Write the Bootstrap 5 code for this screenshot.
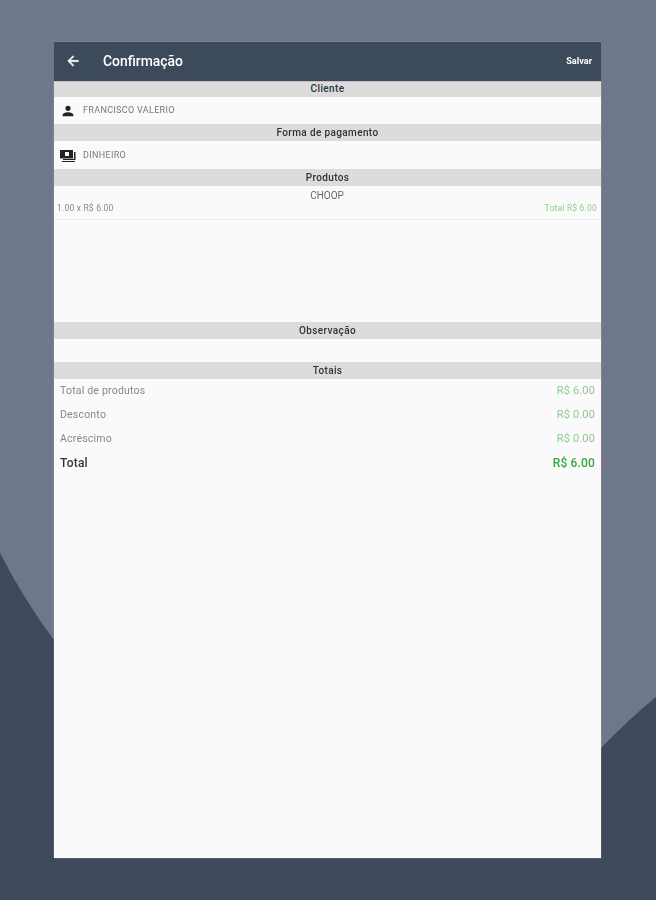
<!DOCTYPE html>
<html lang="pt">
<head>
<meta charset="utf-8">
<title>Confirmação</title>
<link href="https://cdn.jsdelivr.net/npm/bootstrap@5.3.0/dist/css/bootstrap.min.css" rel="stylesheet">
<style>
html,body{height:100%;}
body{background:#6f788a;font-family:Roboto,"Liberation Sans",sans-serif;color:#444;overflow:hidden;}
.stage{position:relative;height:900px;padding:42px 55px 42px 54px;}
.backdrop{position:absolute;inset:0;width:656px;height:900px;}
.panel{position:relative;height:816px;background:#fafafa;box-shadow:0 0 1px rgba(255,255,255,.5);filter:blur(.35px);}
.topbar{height:38px;background:#3d4a5c;color:#fff;padding:0 9px 0 11px;box-shadow:0 1px 1px rgba(25,32,50,.8);position:relative;}
.topbar svg{display:block;}
.page-title{font-size:13.9px;font-weight:500;margin-left:22px;}
.save{font-size:9.2px;font-weight:700;}
.sec-head{height:17px;line-height:17px;background:#dcdcdc;text-align:center;font-size:10px;font-weight:500;letter-spacing:.37px;color:#333;}
.info-row{height:27px;padding-left:6px;padding-top:1px;font-size:9px;color:#777;letter-spacing:.33px;}
.info-row.tall{height:28px;}
.info-row svg{flex:none;margin-right:7px;}
.prod{height:136px;}
.prod-inner{height:34px;padding:4px 4px 0 3px;border-bottom:1px solid #eee;font-size:8.5px;color:#888;letter-spacing:.2px;}
.prod-name{text-align:center;font-size:10px;line-height:12px;color:#666;letter-spacing:0;}
.prod-line{line-height:12px;}
.green-soft{color:#93c997;}
.obs{height:23px;}
.tot-list{padding:0 6px;}
.tot-row{height:24px;font-size:10.5px;color:#888;letter-spacing:.2px;}
.tot-row .val{font-size:11px;color:#8fc993;letter-spacing:.15px;}
.tot-row.grand{font-size:12px;font-weight:500;color:#333;}
.tot-row.grand .val{font-size:12px;font-weight:500;color:#3aa346;}
</style>
</head>
<body>
<div class="stage">
  <svg class="backdrop" viewBox="0 0 656 900" aria-hidden="true"><path fill="#3e4a5c" d="M0 553Q24 600 54 640L601 748Q628 720 656 697V900H0Z"/></svg>
  <main class="panel d-flex flex-column">
    <header class="topbar d-flex align-items-center">
      <svg width="16" height="16" viewBox="0 0 24 24" fill="#fff" stroke="#fff" stroke-width=".8"><path d="M20 11H7.83l5.59-5.59L12 4l-8 8 8 8 1.41-1.41L7.83 13H20z"/></svg>
      <span class="page-title">Confirmação</span>
      <span class="save ms-auto">Salvar</span>
    </header>
    <div class="sec-head">Cliente</div>
    <div class="info-row d-flex align-items-center">
      <svg width="16" height="16" viewBox="0 0 24 24" fill="#222"><path d="M12 12c2.2 0 4-1.800 4-4s-1.800-4-4-4-4 1.800-4 4 1.800 4 4 4zm0 2c-2.700 0-8 1.300-8 4v2h16v-2c0-2.700-5.300-4-8-4z"/></svg>
      <span>FRANCISCO VALERIO</span>
    </div>
    <div class="sec-head">Forma de pagamento</div>
    <div class="info-row tall d-flex align-items-center">
      <svg width="16" height="14" viewBox="0 0 16 14" fill="#222"><path d="M0 1h13v8.500H0zM5 3v4h4V3z" fill-rule="evenodd"/><path d="M14 3h1.500v8H3V10h11zM2 12h13v1H2z"/></svg>
      <span>DINHEIRO</span>
    </div>
    <div class="sec-head">Produtos</div>
    <div class="prod">
      <div class="prod-inner">
        <div class="prod-name">CHOOP</div>
        <div class="prod-line d-flex justify-content-between"><span>1.00 x R$ 6.00</span><span class="green-soft">Total R$ 6.00</span></div>
      </div>
    </div>
    <div class="sec-head">Observação</div>
    <div class="obs"></div>
    <div class="sec-head">Totais</div>
    <div class="tot-list">
      <div class="tot-row d-flex justify-content-between align-items-center"><span>Total de produtos</span><span class="val">R$ 6.00</span></div>
      <div class="tot-row d-flex justify-content-between align-items-center"><span>Desconto</span><span class="val">R$ 0.00</span></div>
      <div class="tot-row d-flex justify-content-between align-items-center"><span>Acréscimo</span><span class="val">R$ 0.00</span></div>
      <div class="tot-row grand d-flex justify-content-between align-items-center"><span>Total</span><span class="val">R$ 6.00</span></div>
    </div>
  </main>
</div>
<script src="https://cdn.jsdelivr.net/npm/bootstrap@5.3.0/dist/js/bootstrap.bundle.min.js"></script>
</body>
</html>
